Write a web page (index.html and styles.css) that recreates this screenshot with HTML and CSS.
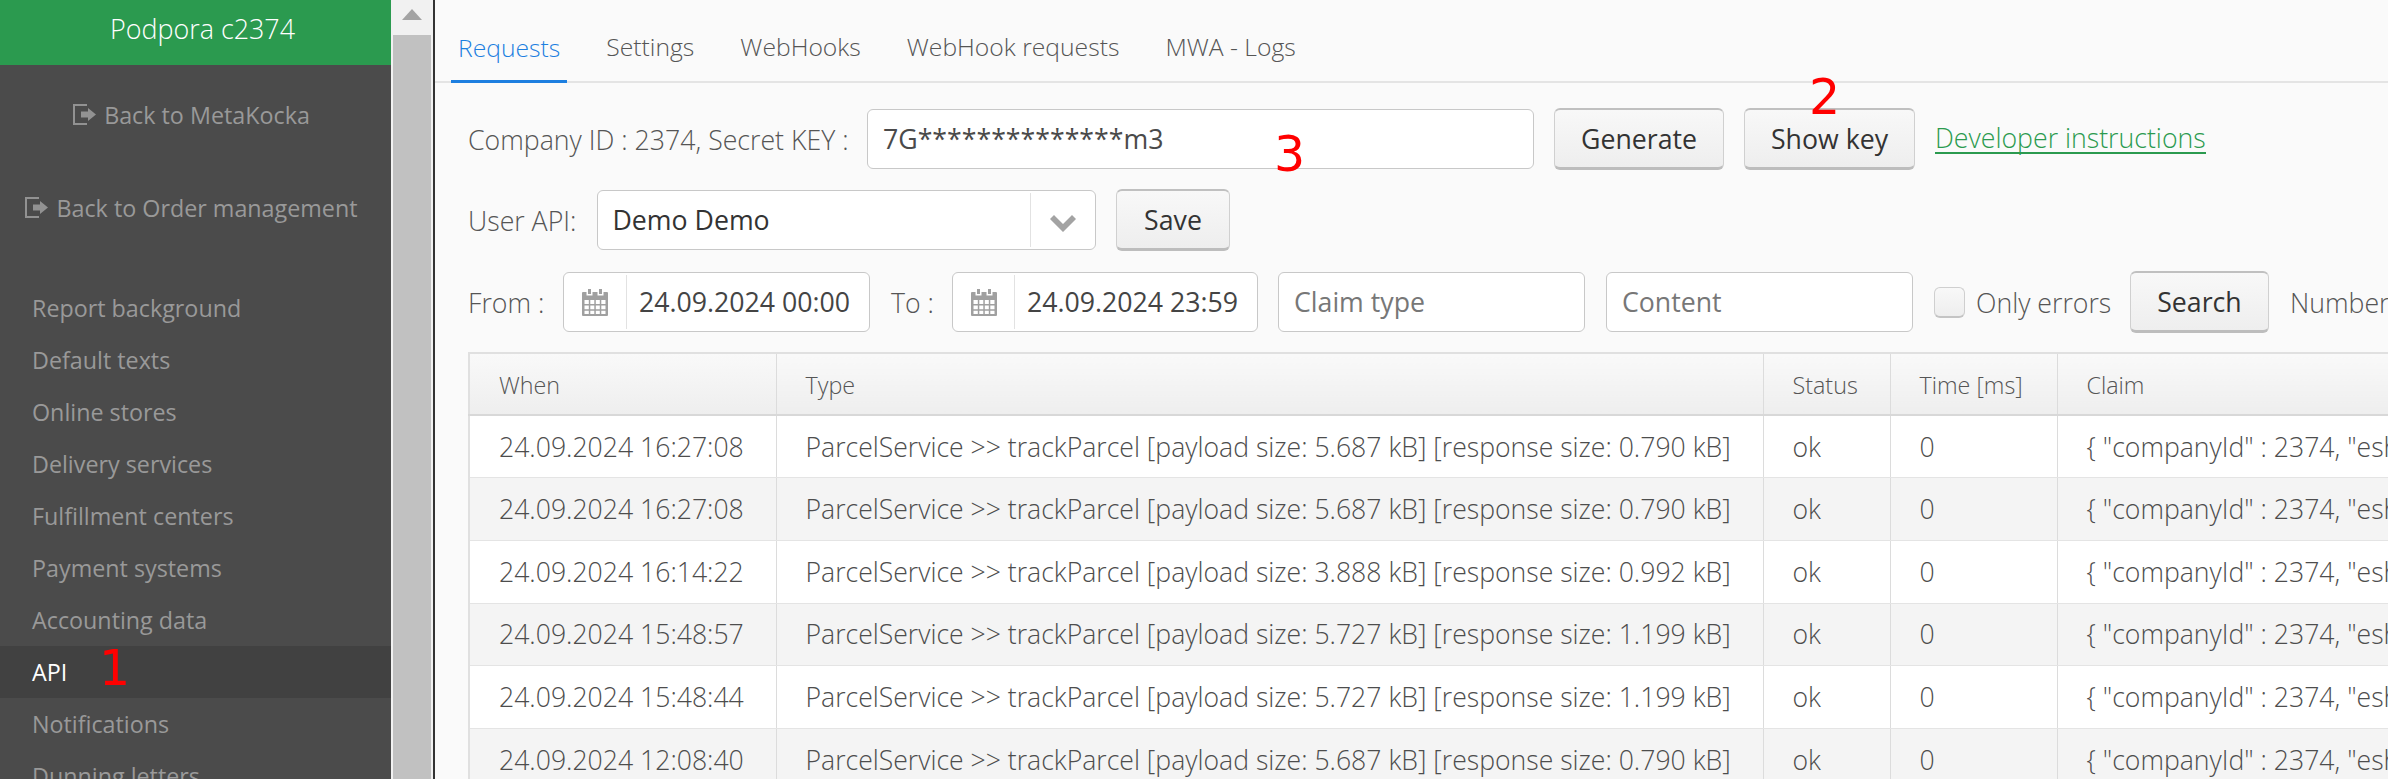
FILE: index.html
```html
<!DOCTYPE html>
<html lang="en">
<head>
<meta charset="utf-8">
<title>API</title>
<link rel="stylesheet" href="styles.css">
</head>
<body>
<div class="app">
  <aside class="sidebar">
    <div class="brand">Podpora c2374</div>
    <a class="back back-first"><svg class="ico-out" viewBox="0 0 24 22"><path d="M0 0h14v2H2v17h12v2H0z"/><path d="M8 7.500h7V4l8 6.500-8 6.500v-3.500H8z"/></svg>Back to MetaKocka</a>
    <a class="back back-second"><svg class="ico-out" viewBox="0 0 24 22"><path d="M0 0h14v2H2v17h12v2H0z"/><path d="M8 7.500h7V4l8 6.500-8 6.500v-3.500H8z"/></svg>Back to Order management</a>
    <nav class="menu">
      <a class="item">Report background</a>
      <a class="item">Default texts</a>
      <a class="item">Online stores</a>
      <a class="item">Delivery services</a>
      <a class="item">Fulfillment centers</a>
      <a class="item">Payment systems</a>
      <a class="item">Accounting data</a>
      <a class="item active">API<span class="mark mark-1">1</span></a>
      <a class="item">Notifications</a>
      <a class="item">Dunning letters</a>
    </nav>
  </aside>
  <div class="scrollbar"><div class="scroll-up"><span class="tri"></span></div><div class="scroll-thumb"></div></div>
  <main class="main">
    <div class="tabs">
      <a class="tab active">Requests</a>
      <a class="tab">Settings</a>
      <a class="tab">WebHooks</a>
      <a class="tab">WebHook requests</a>
      <a class="tab">MWA - Logs</a>
    </div>
    <div class="content">
      <div class="row row-key">
        <span class="lbl">Company ID : 2374, Secret KEY :</span>
        <div class="input key">7G**************m3<span class="mark mark-3">3</span></div>
        <button class="btn btn-gen">Generate</button>
        <button class="btn btn-show">Show key<span class="mark mark-2">2</span></button>
        <a class="link">Developer instructions</a>
      </div>
      <div class="row row-user">
        <span class="lbl">User API:</span>
        <div class="select"><span class="select-val">Demo Demo</span><span class="select-arrow"><svg class="chev" viewBox="0 0 26 18"><path d="M0 5l4-4 9 9 9-9 4 4-13 13z"/></svg></span></div>
        <button class="btn btn-save">Save</button>
      </div>
      <div class="row row-filter">
        <span class="lbl lbl-from">From :</span>
        <div class="date date-from"><span class="date-ico"><svg class="cal" viewBox="0 0 26 27"><path fill-rule="evenodd" d="M6 0h3v5H6zM17 0h3v5h-3zM1 3h3.500v3.500h6V3h5v3.500h6V3H25q1 0 1 1v22q0 1-1 1H1q-1 0-1-1V4q0-1 1-1zM2.500 11v4h4.300v-4zM8.300 11v4h4v-4zM13.800 11v4h4v-4zM19.300 11v4h4.200v-4zM2.500 16.500v3.800h4.300v-3.800zM8.300 16.500v3.800h4v-3.800zM13.800 16.500v3.800h4v-3.800zM19.300 16.500v3.800h4.200v-3.800zM2.500 21.800v3.200h4.300v-3.200zM8.300 21.800v3.200h4v-3.200zM13.800 21.800v3.200h4v-3.200zM19.300 21.800v3.200h4.200v-3.200z"/></svg></span><span class="date-val">24.09.2024 00:00</span></div>
        <span class="lbl lbl-to">To :</span>
        <div class="date date-to"><span class="date-ico"><svg class="cal" viewBox="0 0 26 27"><path fill-rule="evenodd" d="M6 0h3v5H6zM17 0h3v5h-3zM1 3h3.500v3.500h6V3h5v3.500h6V3H25q1 0 1 1v22q0 1-1 1H1q-1 0-1-1V4q0-1 1-1zM2.500 11v4h4.300v-4zM8.300 11v4h4v-4zM13.800 11v4h4v-4zM19.300 11v4h4.200v-4zM2.500 16.500v3.800h4.300v-3.800zM8.300 16.500v3.800h4v-3.800zM13.800 16.500v3.800h4v-3.800zM19.300 16.500v3.800h4.200v-3.800zM2.500 21.800v3.200h4.300v-3.200zM8.300 21.800v3.200h4v-3.200zM13.800 21.800v3.200h4v-3.200zM19.300 21.800v3.200h4.200v-3.200z"/></svg></span><span class="date-val">24.09.2024 23:59</span></div>
        <div class="input filter ph">Claim type</div>
        <div class="input filter ph">Content</div>
        <span class="check"></span>
        <span class="lbl lbl-only">Only errors</span>
        <button class="btn btn-search">Search</button>
        <span class="lbl lbl-num">Number of rows</span>
      </div>
      <table class="grid">
        <colgroup><col class="c1"><col class="c2"><col class="c3"><col class="c4"><col class="c5"></colgroup>
        <thead><tr><th>When</th><th>Type</th><th>Status</th><th>Time [ms]</th><th>Claim</th></tr></thead>
        <tbody>
          <tr><td>24.09.2024 16:27:08</td><td>ParcelService &gt;&gt; trackParcel [payload size: 5.687 kB] [response size: 0.790 kB]</td><td>ok</td><td>0</td><td>{ "companyId" : 2374, "eshop_sync_id" : "d1"</td></tr>
          <tr><td>24.09.2024 16:27:08</td><td>ParcelService &gt;&gt; trackParcel [payload size: 5.687 kB] [response size: 0.790 kB]</td><td>ok</td><td>0</td><td>{ "companyId" : 2374, "eshop_sync_id" : "d1"</td></tr>
          <tr><td>24.09.2024 16:14:22</td><td>ParcelService &gt;&gt; trackParcel [payload size: 3.888 kB] [response size: 0.992 kB]</td><td>ok</td><td>0</td><td>{ "companyId" : 2374, "eshop_sync_id" : "d1"</td></tr>
          <tr><td>24.09.2024 15:48:57</td><td>ParcelService &gt;&gt; trackParcel [payload size: 5.727 kB] [response size: 1.199 kB]</td><td>ok</td><td>0</td><td>{ "companyId" : 2374, "eshop_sync_id" : "d1"</td></tr>
          <tr><td>24.09.2024 15:48:44</td><td>ParcelService &gt;&gt; trackParcel [payload size: 5.727 kB] [response size: 1.199 kB]</td><td>ok</td><td>0</td><td>{ "companyId" : 2374, "eshop_sync_id" : "d1"</td></tr>
          <tr><td>24.09.2024 12:08:40</td><td>ParcelService &gt;&gt; trackParcel [payload size: 5.687 kB] [response size: 0.790 kB]</td><td>ok</td><td>0</td><td>{ "companyId" : 2374, "eshop_sync_id" : "d1"</td></tr>
        </tbody>
      </table>
    </div>
  </main>
</div>
</body>
</html>
```
FILE: styles.css
```css
* { box-sizing: border-box; }
html, body { margin: 0; height: 100%; overflow: hidden; }
body { font-family: "Open Sans", sans-serif; font-size: 26.7px; color: #4d4d4d; background: #fafafa; }
.app { display: flex; width: 2388px; height: 779px; overflow: hidden; }

.sidebar { flex: 0 0 391px; background: #4b4b4b; color: #999; overflow: hidden; }
.brand { height: 65px; background: #2b9a4f; color: #fff; font-size: 26.9px; line-height: 58px; text-align: center; font-weight: 300; padding-left: 14px; white-space: nowrap; }
.back { display: flex; align-items: center; justify-content: center; font-size: 23.3px; line-height: 34px; color: #999; padding-right: 8px; }
.back-first { margin-top: 33px; }
.back-second { margin-top: 59px; }
.ico-out { width: 24px; height: 22px; margin-right: 7px; fill: #929292; flex: none; }
.menu { margin-top: 57px; display: flex; flex-direction: column; }
.item { height: 52px; line-height: 52px; padding-left: 32px; color: #999; font-size: 23.3px; position: relative; white-space: nowrap; }
.item.active { background: #414141; color: #fff; }

.scrollbar { flex: 0 0 42px; background: #f1f1f1; padding: 0 2px; display: flex; flex-direction: column; }
.scroll-up { height: 35px; display: flex; justify-content: center; padding-top: 9px; }
.tri { width: 0; height: 0; border-left: 10px solid transparent; border-right: 10px solid transparent; border-bottom: 11px solid #a3a3a3; }
.scroll-thumb { flex: 1; background: #c1c1c1; }

.main { flex: 1; min-width: 0; border-left: 2px solid #333; background: #fafafa; overflow: hidden; position: relative; }
.tabs { height: 83px; padding-left: 16px; border-bottom: 2px solid #e4e4e4; display: flex; align-items: flex-end; }
.tab { flex: none; height: 50px; padding: 0 7px; margin-right: 32px; font-size: 24.7px; font-weight: 300; color: #555; line-height: 32px; white-space: nowrap; }
.tab.active { color: #1d7fe0; border-bottom: 3px solid #1d7fe0; margin-bottom: -2px; height: 51px; }

.content { padding: 25px 0 0 33px; }
.row { display: flex; align-items: center; white-space: nowrap; }
.row > * { flex: none; }
.row-key { height: 62px; }
.row-user { height: 62px; margin-top: 19px; }
.row-filter { height: 62px; margin-top: 20px; }
.lbl { font-weight: 300; color: #555; }
.row-key .lbl { width: 399px; }
.row-user .lbl { width: 128.500px; }
.input { height: 60px; border: 1px solid #c8c8c8; border-radius: 6px; background: #fff; line-height: 58px; padding-left: 15px; color: #4a4a4a; position: relative; }
.key { width: 667px; margin-right: 20px; }
.btn { font-family: inherit; font-size: 26.7px; color: #333; height: 62px; padding: 0; background: linear-gradient(#f8f8f8, #eeeeee); border: 1px solid #d0d0d0; border-top: 2px solid #c0c0c0; border-bottom: 3px solid #bdbdbd; border-radius: 6px; position: relative; }
.btn-gen { width: 170px; margin-right: 20px; }
.btn-show { width: 171px; margin-right: 20px; }
.link { color: #2b9a4f; font-weight: 300; border-bottom: 2px solid #2b9a4f; line-height: 28px; }
.select { width: 499.500px; height: 60px; border: 1px solid #c8c8c8; border-radius: 6px; background: #fff; display: flex; margin-right: 20px; }
.select-val { flex: 1; line-height: 58px; padding-left: 15px; color: #333; }
.select-arrow { flex: 0 0 65px; border-left: 1px solid #e2e2e2; display: flex; align-items: center; justify-content: center; margin: 2px 0; }
.chev { width: 26px; height: 18px; fill: #a3a3a3; margin-top: 5px; }
.btn-save { width: 114px; }
.lbl-from { width: 95px; }
.date { width: 307px; height: 60px; border: 1px solid #c8c8c8; border-radius: 6px; background: #fff; display: flex; }
.date-to { width: 306px; margin-right: 20px; }
.date-ico { flex: 0 0 63px; border-right: 1px solid #e2e2e2; display: flex; align-items: center; justify-content: center; margin: 2px 0; }
.date-to .date-ico { flex-basis: 62px; }
.cal { width: 26px; height: 27px; fill: #a0a0a0; }
.date-val { padding-left: 12px; line-height: 58px; color: #444; }
.lbl-to { width: 82px; padding-left: 21px; }
.filter { width: 307px; margin-right: 21px; }
.ph { color: #777; font-weight: 400; }
.check { width: 31px; height: 31px; border: 1px solid #cfcfcf; border-bottom: 2px solid #c4c4c4; border-radius: 6px; background: linear-gradient(#f8f8f8, #eeeeee); margin-right: 11px; }
.lbl-only { width: 154px; }
.btn-search { width: 139px; margin-right: 21px; }

.grid { margin-top: 19px; width: 2400px; table-layout: fixed; border-collapse: collapse; border: 2px solid #e0e0e0; background: #fff; font-weight: 300; }
.c1 { width: 307px; } .c2 { width: 987px; } .c3 { width: 127px; } .c4 { width: 167px; } .c5 { width: 812px; }
.grid th { height: 62px; font-weight: 300; font-size: 23.3px; text-align: left; padding: 1px 0 0 29px; color: #555; background: linear-gradient(#f9f9f9, #eeeeee); border: 1px solid #dcdcdc; border-bottom: 2px solid #d8d8d8; border-top: 0; }
.grid td { height: 62.700px; font-size: 26.6px; padding: 0 0 0 29px; color: #4d4d4d; border-left: 1px solid #dcdcdc; border-bottom: 1px solid #e4e4e4; white-space: nowrap; overflow: hidden; }
.grid tbody tr:nth-child(even) td { background: #f4f4f4; }

.mark { position: absolute; font-family: "DejaVu Sans", sans-serif; font-weight: 400; font-size: 49px; line-height: 50px; color: #f00; }
.mark-1 { left: 99px; top: -2px; }
.mark-2 { left: 64px; top: -37px; }
.mark-3 { left: 406px; top: 20px; }
```
